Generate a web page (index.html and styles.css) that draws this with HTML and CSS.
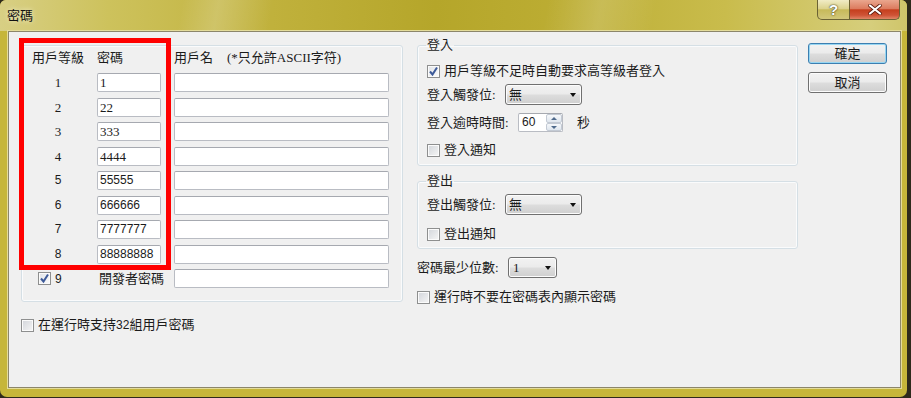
FILE: index.html
```html
<!DOCTYPE html>
<html lang="zh-Hant">
<head>
    <meta charset="UTF-8">
    <title>密碼</title>
    <link rel="stylesheet" href="styles.css">
</head>
<body>
<div class="window">
    <div class="titlebar">
        <span class="title">密碼</span>
        <div class="caption">
            <span class="cap-btn cap-help">?</span>
            <span class="cap-btn cap-close">
                <svg width="14" height="11" viewBox="0 0 14 11"><path d="M2 1.5 L12 9.5 M12 1.5 L2 9.5" stroke="#5a1a0c" stroke-width="3.6" stroke-linecap="round"/><path d="M2 1.5 L12 9.5 M12 1.5 L2 9.5" stroke="#fff" stroke-width="2.2" stroke-linecap="round"/></svg>
            </span>
        </div>
    </div>
    <div class="frame">
        <div class="client">
            <!-- left: user table -->
            <div class="col-left">
                <div class="group users">
                    <div class="user-grid">
                        <span class="hd">用戶等級</span>
                        <span class="hd">密碼</span>
                        <span class="hd">用戶名<span class="hint">(*只允許ASCII字符)</span></span>

                        <span class="lvl">1</span><span class="field">1</span><span class="field"></span>
                        <span class="lvl">2</span><span class="field">22</span><span class="field"></span>
                        <span class="lvl">3</span><span class="field">333</span><span class="field"></span>
                        <span class="lvl">4</span><span class="field">4444</span><span class="field"></span>
                        <span class="lvl sans">5</span><span class="field sans">55555</span><span class="field"></span>
                        <span class="lvl sans">6</span><span class="field sans">666666</span><span class="field"></span>
                        <span class="lvl sans">7</span><span class="field sans">7777777</span><span class="field"></span>
                        <span class="lvl sans">8</span><span class="field sans">88888888</span><span class="field"></span>

                        <span class="lvl9">
                            <span class="box checked"><svg width="11" height="11" viewBox="0 0 11 11"><path d="M2 5.5 L4.5 8.5 L9 1.5" fill="none" stroke="#3d5a99" stroke-width="2"/></svg></span>
                            <span class="sans">9</span>
                        </span>
                        <span class="dev">開發者密碼</span>
                        <span class="field"></span>
                    </div>
                </div>
                <label class="check bottom-check"><span class="box"></span><span>在運行時支持<span class="sans">32</span>組用戶密碼</span></label>
            </div>

            <!-- right: login / logout options -->
            <div class="col-right">
                <fieldset class="group login">
                    <legend>登入</legend>
                    <label class="check r1"><span class="box checked"><svg width="11" height="11" viewBox="0 0 11 11"><path d="M2 5.5 L4.5 8.5 L9 1.5" fill="none" stroke="#3d5a99" stroke-width="2"/></svg></span><span>用戶等級不足時自動要求高等級者登入</span></label>
                    <div class="line r2">
                        <span class="lbl w78">登入觸發位:</span>
                        <span class="combo w77">無<i class="arrow"></i></span>
                    </div>
                    <div class="line r3">
                        <span class="lbl w91">登入逾時時間:</span>
                        <span class="spin">
                            <span class="spin-text sans">60</span>
                            <span class="spin-btns">
                                <span class="sb up"></span>
                                <span class="sb down"></span>
                            </span>
                        </span>
                        <span class="unit">秒</span>
                    </div>
                    <label class="check"><span class="box"></span><span>登入通知</span></label>
                </fieldset>

                <fieldset class="group logout">
                    <legend>登出</legend>
                    <div class="line r-out">
                        <span class="lbl w78">登出觸發位:</span>
                        <span class="combo w77">無<i class="arrow"></i></span>
                    </div>
                    <label class="check"><span class="box"></span><span>登出通知</span></label>
                </fieldset>

                <div class="line min-row">
                    <span class="lbl w91">密碼最少位數:</span>
                    <span class="combo w49">1<i class="arrow"></i></span>
                </div>
                <label class="check hide-row"><span class="box"></span><span>運行時不要在密碼表內顯示密碼</span></label>
            </div>

            <div class="col-buttons">
                <button class="btn default">確定</button>
                <button class="btn">取消</button>
            </div>

            <div class="highlight"></div>
        </div>
    </div>
</div>
</body>
</html>
```

FILE: styles.css
```css
body {
    margin: 0;
    width: 911px;
    height: 398px;
    overflow: hidden;
    background: #2e2a1c;
    font-family: "Liberation Serif", "Noto Sans CJK TC", serif;
    font-size: 13px;
    line-height: 14px;
    color: #1b1b1b;
}

.sans {
    font-family: "Liberation Sans", "Noto Sans CJK TC", sans-serif;
    font-size: 12px;
}

/* window frame */
.window {
    width: 907px;
    height: 397px;
    display: flex;
    flex-direction: column;
    background: #c6b63a;
    border-radius: 6px 6px 7px 7px;
    overflow: hidden;
}

.titlebar {
    height: 31px;
    flex: none;
    display: flex;
    justify-content: space-between;
    align-items: flex-start;
    background:
        linear-gradient(100deg, rgba(255,255,255,0) 20%, rgba(255,255,255,.18) 24%, rgba(255,255,255,0) 30%, rgba(255,255,255,0) 60%, rgba(255,255,255,.15) 66%, rgba(255,255,255,0) 72%),
        linear-gradient(to right, #d8cf84 0%, #cdc25c 12%, #c0b13c 30%, #b5a62a 48%, #bcad33 62%, #c9bc4c 80%, #d6ce7c 96%, #cfc56a 100%);
}

.title {
    margin: 9px 0 0 7px;
    color: #111;
    text-shadow: 0 0 5px rgba(255, 255, 240, .8);
}

.caption {
    display: flex;
    margin-right: 7px;
}

.cap-btn {
    height: 19px;
    display: flex;
    align-items: center;
    justify-content: center;
    border: 1px solid #6b6234;
    border-top: none;
}

.cap-help {
    width: 31px;
    border-radius: 0 0 0 5px;
    background: linear-gradient(#f1ecc6, #dcd38e 45%, #c7ba5a 52%, #d2c77a);
    color: #fff;
    font: bold 15px "Liberation Sans", sans-serif;
    text-shadow: 0 0 2px #4a4420, 0 0 1px #4a4420;
}

.cap-close {
    width: 49px;
    border-left: none;
    border-radius: 0 0 5px 0;
    background: linear-gradient(#eaa78e, #dc7c5f 45%, #c53f1e 52%, #cf5336 80%, #e08667);
}

.frame {
    flex: 1;
    display: flex;
    padding: 0 6px 9px 8px;
}

.client {
    flex: 1;
    position: relative;
    display: flex;
    align-items: flex-start;
    padding-left: 12px;
    background: #f0f0f0;
    border: 1px solid #8c866a;
    box-shadow: 0 0 0 1px #e4dc9a;
}

/* group boxes */
.group {
    border: 1px solid #d5dfe5;
    border-radius: 3px;
    box-shadow: inset 0 0 0 1px #fafbfc;
}

.col-left {
    width: 382px;
    margin-top: 13px;
}

.users {
    padding: 5px 12px 13px 10px;
}

.user-grid {
    display: grid;
    grid-template-columns: 52px 64px 215px;
    grid-template-rows: 16.5px repeat(9, 19px);
    column-gap: 13px;
    row-gap: 5.5px;
}

.hd {
    align-self: start;
    white-space: nowrap;
}

.hint {
    margin-left: 14px;
}

.lvl {
    text-align: center;
    line-height: 19px;
}

.field {
    box-sizing: border-box;
    height: 19px;
    padding-left: 2px;
    line-height: 17px;
    background: #fff;
    border: 1px solid #b9bcc3;
    border-top-color: #a6a9b0;
    border-radius: 2px;
}

.lvl9 {
    display: flex;
    align-items: center;
    gap: 4px;
    padding-left: 6px;
}

.dev {
    padding-left: 2px;
    line-height: 19px;
    white-space: nowrap;
}

/* checkboxes */
.check {
    display: flex;
    align-items: center;
    height: 14px;
    white-space: nowrap;
}

.box {
    width: 13px;
    height: 13px;
    flex: none;
    box-sizing: border-box;
    display: flex;
    align-items: center;
    justify-content: center;
    border: 1px solid #8e8f8f;
    background: linear-gradient(135deg, #d2d5da, #f6f6f6);
    box-shadow: inset 0 0 0 1px #fbfbfb;
}

.check .box {
    margin-right: 4px;
}

.box.checked {
    background: linear-gradient(135deg, #e0e3e8, #fcfcfc);
}

.bottom-check {
    margin-top: 16px;
}

/* right column */
.col-right {
    width: 381px;
    margin: 6px 0 0 14px;
}

fieldset.group {
    margin: 0;
    min-width: 0;
    padding: 12px 8px 8px 9px;
}

legend {
    padding: 0 1px;
    margin-left: -1px;
    line-height: 14px;
}

.line {
    display: flex;
    align-items: center;
}

.lbl {
    flex: none;
    white-space: nowrap;
}

.w78 { width: 78px; }
.w91 { width: 91px; }

.r1 { margin-bottom: 6px; }
.r2 { height: 21px; margin-bottom: 8px; }
.r3 { height: 19px; margin-bottom: 11px; }

.logout {
    margin-top: 8px !important;
    padding-top: 6px !important;
    padding-bottom: 7px !important;
}

.r-out {
    height: 21px;
    margin-bottom: 12px;
}

.min-row {
    height: 21px;
    margin-top: 8px;
}

.hide-row {
    margin-top: 12px;
}

/* combo box */
.combo {
    position: relative;
    box-sizing: border-box;
    height: 21px;
    padding-left: 3px;
    line-height: 19px;
    border: 1px solid #707070;
    border-radius: 3px;
    background: linear-gradient(#f2f2f2 0%, #ebebeb 48%, #dddddd 52%, #cfcfcf 100%);
    box-shadow: inset 0 0 0 1px #fcfcfc;
}

.w77 { width: 77px; }
.w49 { width: 49px; padding-left: 4px; }

.arrow {
    position: absolute;
    right: 5px;
    top: 8px;
    width: 0;
    height: 0;
    border-left: 3.5px solid transparent;
    border-right: 3.5px solid transparent;
    border-top: 4px solid #111;
}

/* spinner */
.spin {
    display: flex;
    box-sizing: border-box;
    width: 45px;
    height: 19px;
    background: #fff;
    border: 1px solid #b9bcc3;
    border-top-color: #a6a9b0;
    border-radius: 2px;
}

.spin-text {
    flex: 1;
    padding-left: 3px;
    line-height: 17px;
}

.spin-btns {
    width: 16px;
    display: flex;
    flex-direction: column;
}

.sb {
    flex: 1;
    position: relative;
    border: 1px solid #c3cad4;
    border-radius: 2px;
    background: linear-gradient(#f6f8fb, #dfe6ee);
}

.sb::after {
    content: "";
    position: absolute;
    left: 4px;
    width: 0;
    height: 0;
    border-left: 3px solid transparent;
    border-right: 3px solid transparent;
}

.sb.up::after {
    top: 1.5px;
    border-bottom: 3px solid #4f6a8c;
}

.sb.down::after {
    top: 2px;
    border-top: 3px solid #4f6a8c;
}

.unit {
    margin-left: 14px;
}

/* dialog buttons */
.col-buttons {
    display: flex;
    flex-direction: column;
    gap: 8px;
    margin: 11px 0 0 10px;
}

.btn {
    width: 79px;
    height: 21px;
    padding: 0;
    font: inherit;
    color: #1b1b1b;
    border: 1px solid #707070;
    border-radius: 3px;
    background: linear-gradient(#f2f2f2 0%, #ebebeb 48%, #dddddd 52%, #cfcfcf 100%);
    box-shadow: inset 0 0 0 1px #fcfcfc;
}

.btn.default {
    border-color: #3c7fb1;
    box-shadow: inset 0 0 0 1px #97d6f2;
}

/* annotation frame */
.highlight {
    position: absolute;
    left: 10px;
    top: 6px;
    width: 152px;
    height: 232px;
    box-sizing: border-box;
    border: 5px solid #ff0000;
}
```
